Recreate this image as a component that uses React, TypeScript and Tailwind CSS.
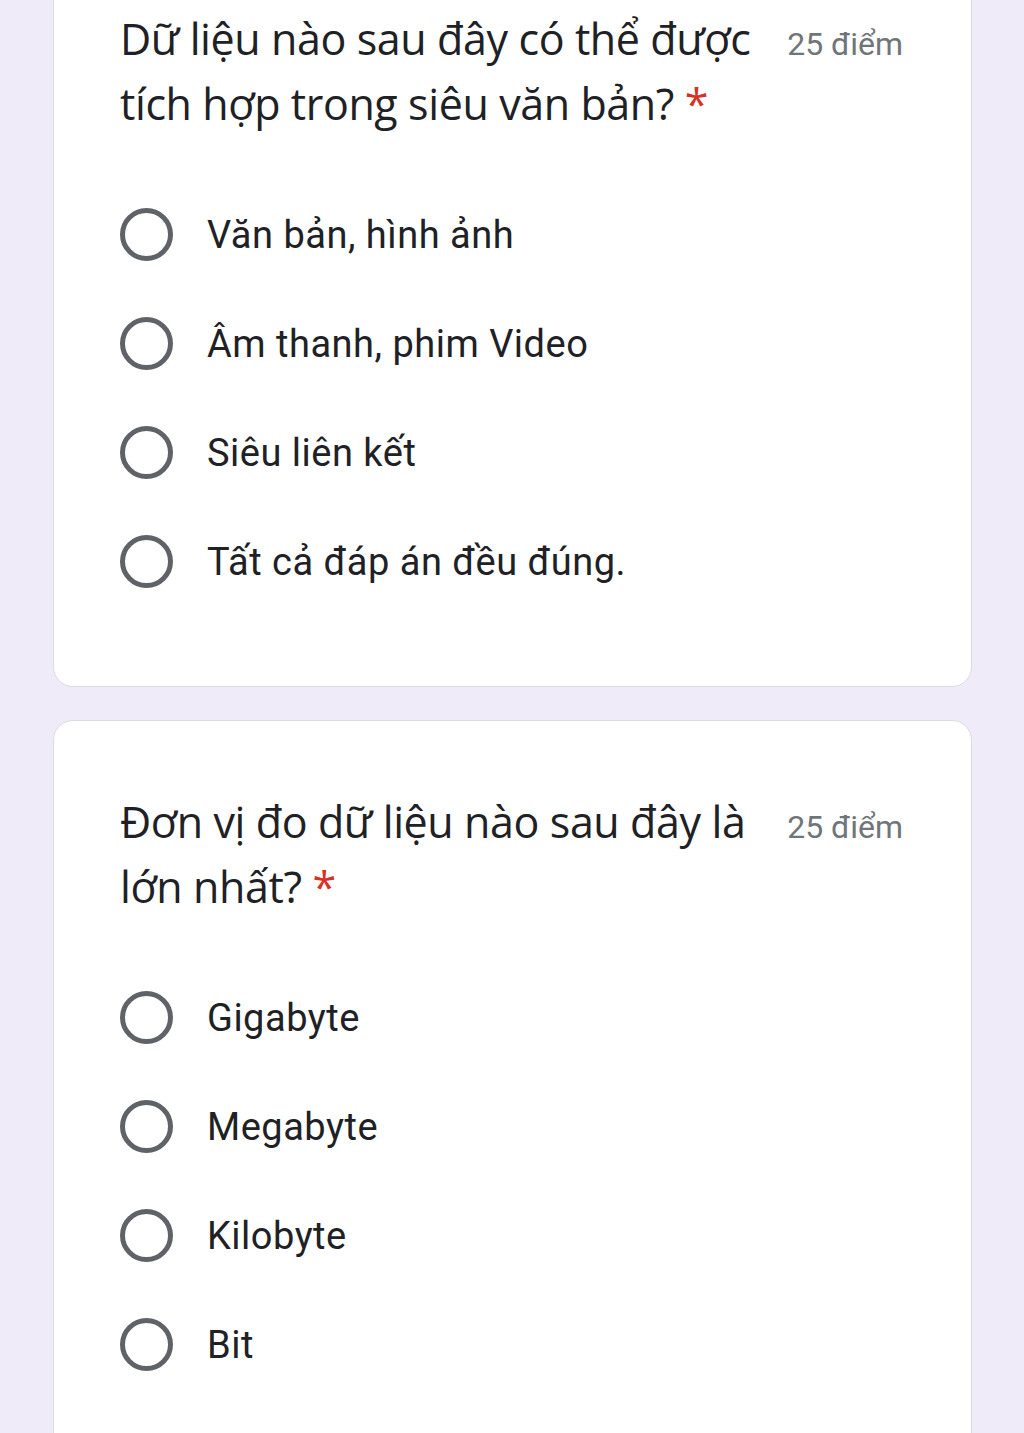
const QUESTIONS = [
  {
    title: 'Dữ liệu nào sau đây có thể được tích hợp trong siêu văn bản?',
    points: '25 điểm',
    options: ['Văn bản, hình ảnh', 'Âm thanh, phim Video', 'Siêu liên kết', 'Tất cả đáp án đều đúng.'],
  },
  {
    title: 'Đơn vị đo dữ liệu nào sau đây là lớn nhất?',
    points: '25 điểm',
    options: ['Gigabyte', 'Megabyte', 'Kilobyte', 'Bit'],
  },
]

function Radio() {
  return <div className="w-[53px] h-[53px] shrink-0 rounded-full border-[5px] border-[#5f6368]" />
}

function QuestionCard({ title, points, options }: { title: string; points: string; options: string[] }) {
  return (
    <div className="bg-white border border-[#dadce0] rounded-[20px] pl-[66px] pr-[68px] pt-[68px] pb-[98px]">
      {/* Header */}
      <div className="flex items-baseline justify-between gap-6">
        <h2 className="w-[648px] text-[#202124] text-[43px] leading-[65px] font-normal font-['Open_Sans',sans-serif] tracking-[-0.4px]">
          {title} <span className="text-[#d93025]">*</span>
        </h2>
        <span className="text-[#70757a] text-[32px] font-['Roboto',sans-serif] whitespace-nowrap">{points}</span>
      </div>

      {/* Options */}
      <div className="mt-[72px] flex flex-col gap-[56px]">
        {options.map((opt) => (
          <label key={opt} className="flex items-center gap-[34px] h-[53px]">
            <Radio />
            <span className="text-[#202124] text-[38px] tracking-[0.5px] font-['Roboto',sans-serif] leading-none">
              {opt}
            </span>
          </label>
        ))}
      </div>
    </div>
  )
}

export default function App() {
  return (
    <div className="min-h-screen bg-[#f0ebf8] pl-[53px] pr-[52px] overflow-hidden">
      <div className="-mt-[63px] flex flex-col gap-[33px]">
        {QUESTIONS.map((q) => (
          <QuestionCard key={q.title} {...q} />
        ))}
      </div>
    </div>
  )
}
